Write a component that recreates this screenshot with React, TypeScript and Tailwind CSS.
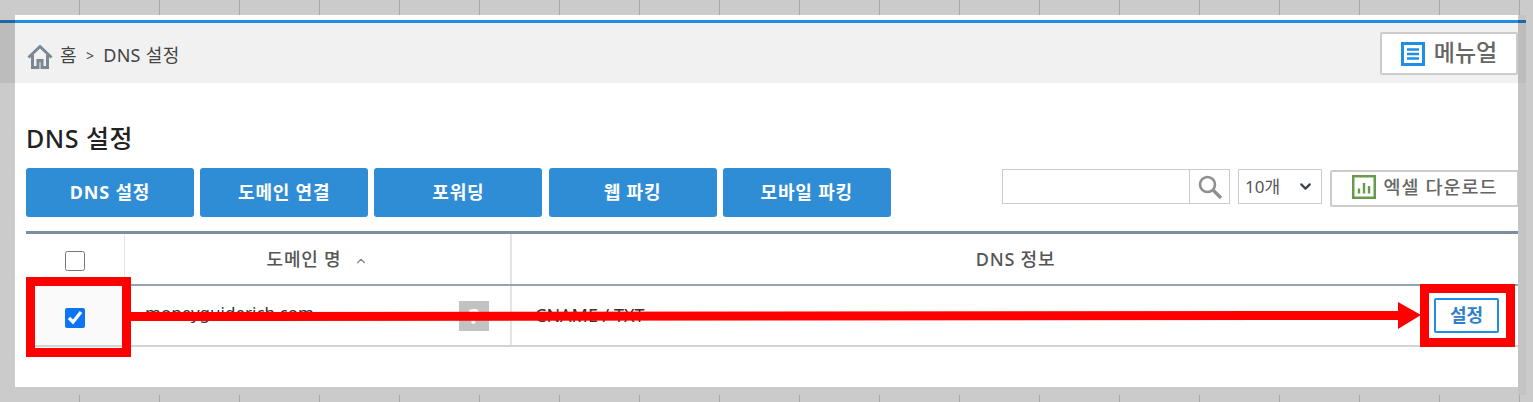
import { ChevronDown, ChevronUp } from "lucide-react";

const font = "font-['Noto_Sans','Noto_Sans_CJK_KR',sans-serif]";
const tabs = ["DNS 설정", "도메인 연결", "포워딩", "웹 파킹", "모바일 파킹"];
const ticks = Array.from({ length: 19 });

function TickRow({ className }: { className: string }) {
  return (
    <div className={`flex ${className}`}>
      {ticks.map((_, i) => (
        <div key={i} className="w-[80px] shrink-0 border-r border-[#a9a9a9]" />
      ))}
    </div>
  );
}

function HomeIcon() {
  return (
    <svg width="26" height="25" viewBox="0 0 26 25" fill="none" stroke="#7b8791" strokeWidth="3">
      <path d="M1.5 13.5 13 2.5l11.5 11" />
      <path d="M5.5 11v12.5h5.5v-7h4v7h5.5V11" />
    </svg>
  );
}

function MenuIcon() {
  return (
    <svg width="24" height="24" viewBox="0 0 24 24" fill="none">
      <rect x="1.5" y="1.5" width="21" height="21" stroke="#1f8fe6" strokeWidth="3" />
      <path d="M6 7.5h12M6 12h12M6 16.5h12" stroke="#1f8fe6" strokeWidth="2.6" />
    </svg>
  );
}

function SearchIcon() {
  return (
    <svg width="26" height="26" viewBox="0 0 26 26" fill="none" stroke="#8f8f8f">
      <circle cx="10.5" cy="10.5" r="7.5" strokeWidth="2.6" />
      <path d="m16 16 8 8" strokeWidth="3.2" />
    </svg>
  );
}

function ExcelIcon() {
  return (
    <svg width="24" height="24" viewBox="0 0 24 24" fill="none" className="translate-y-[3px]">
      <rect x="1.25" y="1.25" width="21.5" height="21.5" stroke="#67994f" strokeWidth="2.5" />
      <path d="M7 13.5v5M12 8v10.5M17 11v7.5" stroke="#67994f" strokeWidth="2.4" />
    </svg>
  );
}

export default function App() {
  return (
    <div className={`relative flex h-[402px] w-[1533px] flex-col overflow-hidden bg-[#cbcbcb] ${font}`}>
      <TickRow className="h-[15px]" />

      <div className="flex h-[372px]">
        {/* left dim strip */}
        <div className="flex w-[15px] flex-col">
          <div className="mt-[5px] h-[3px] bg-[#1a6ba5]" />
          <div className="h-[60px] bg-[#bcbcbc]" />
        </div>

        <div className="w-[1503px] bg-white">
          <div className="mt-[5px] h-[3px] bg-[#1f8fe6]" />
          <div className="flex h-[60px] items-start justify-between bg-[#f1f1f1] pl-[12px]">
            <div className="mt-[19px] flex items-center text-[18px] tracking-[0.3px] text-[#444]">
              <HomeIcon />
              <span className="ml-[7px] pb-[2px]">홈</span>
              <span className="ml-[9px] pb-[2px] text-[14px]">&gt;</span>
              <span className="ml-[9px] pb-[2px]">DNS 설정</span>
            </div>
            <button className="mt-[9px] flex h-[43px] w-[138px] items-center justify-center gap-[9px] rounded-[2px] border-2 border-[#cccccc] bg-white text-[23px] font-medium text-[#666]">
              <MenuIcon />
              <span className="pb-[3px]">메뉴얼</span>
            </button>
          </div>

          <div className="pl-[11px]">
            <h1 className="mt-[37px] h-[36px] text-[25px] leading-[36px] font-medium tracking-[0.5px] text-[#222]">DNS 설정</h1>

            <div className="mt-[12px] mr-[-1px] flex items-start justify-between">
              <div className="flex gap-[6.2px]">
                {tabs.map((t) => (
                  <button
                    key={t}
                    className="h-[49px] w-[168px] rounded-[3px] bg-[#2f8dd6] text-[18px] font-bold tracking-[0.8px] text-white"
                  >
                    {t}
                  </button>
                ))}
              </div>

              <div className="flex items-start">
                <div className="mt-[1px] flex h-[35px] w-[228px] border border-[#cccccc] bg-white">
                  <input className="min-w-0 flex-1 outline-none" />
                  <div className="flex w-[40px] items-center justify-center border-l border-[#cccccc]">
                    <SearchIcon />
                  </div>
                </div>
                <div className="mt-[1px] ml-[8px] flex h-[35px] w-[84px] items-center justify-between border border-[#cccccc] pr-[7px] pl-[6px] text-[17px] text-[#555]">
                  <span>10개</span>
                  <ChevronDown size={17} strokeWidth={3.2} className="text-[#3d4650]" />
                </div>
                <button className="mt-[2px] ml-[8px] flex h-[37px] w-[189px] items-start justify-center gap-[8px] rounded-[2px] border-2 border-[#cccccc] bg-white text-[18.5px] leading-[30px] font-medium tracking-[1px] text-[#666]">
                  <ExcelIcon />
                  엑셀 다운로드
                </button>
              </div>
            </div>

            {/* table */}
            <div className="mt-[14px] w-[1493px] border-t-[3px] border-[#7b8fa0]">
              <div className="flex h-[52px] border-b-2 border-[#93a3b2] text-[18px] font-medium tracking-[0.8px] text-[#555]">
                <div className="flex w-[99px] items-center justify-center border-r border-[#e4e4e4] pt-[4px]">
                  <input type="checkbox" className="h-5 w-5" />
                </div>
                <div className="flex w-[387px] items-center justify-center gap-[13px] border-r-2 border-[#e4e4e4]">
                  도메인 명
                  <ChevronUp size={14} className="mt-[3px] text-[#888]" />
                </div>
                <div className="flex flex-1 items-center justify-center">DNS 정보</div>
              </div>
              <div className="flex h-[61px] border-b-2 border-[#d4d4d4] text-[#333]">
                <div className="flex w-[99px] items-center justify-center border-r border-[#e4e4e4] bg-[#fafafa] pt-[4px]">
                  <input type="checkbox" defaultChecked className="h-5 w-5 accent-[#0b75f5]" />
                </div>
                <div className="flex w-[387px] items-center justify-between border-r-2 border-[#e4e4e4] pr-[21px] pl-[20px] text-[17px]">
                  <span className="pb-[6px]">moneyguiderich.com</span>
                  <div className="flex h-[30px] w-[30px] items-center justify-center bg-[#c2c2c2] text-[22px] font-bold text-white">?</div>
                </div>
                <div className="flex flex-1 items-center justify-between pr-[20px] pl-[23px] text-[18px]">
                  <span className="pb-[1px]">CNAME / TXT</span>
                  <button className="flex h-[35px] w-[65px] items-center justify-center rounded-[2px] border-2 border-[#1f8fe6] font-bold text-[#2f80c8]">
                    설정
                  </button>
                </div>
              </div>
            </div>
          </div>
        </div>

        {/* right dim strip */}
        <div className="flex h-[380px] w-[8px] flex-col self-start bg-[#c4c4c4]">
          <div className="mt-[5px] h-[3px] bg-[#1a6ba5]" />
          <div className="h-[60px] bg-[#bcbcbc]" />
        </div>
      </div>

      <TickRow className="h-[15px] pt-[8px]" />

      {/* annotations */}
      <div className="absolute top-[277px] left-[26px] h-[80px] w-[105px] border-[9px] border-[#ff0000]" />
      <div className="absolute top-[284px] left-[1420px] h-[63px] w-[95px] border-[9px] border-[#ff0000]" />
      <svg className="absolute top-[302px] left-[131px]" width="1290" height="27" viewBox="0 0 1290 27">
        <path d="M0 10 1267 9V0l23 13-23 14v-9L0 19z" fill="#ff0000" />
      </svg>
    </div>
  );
}
